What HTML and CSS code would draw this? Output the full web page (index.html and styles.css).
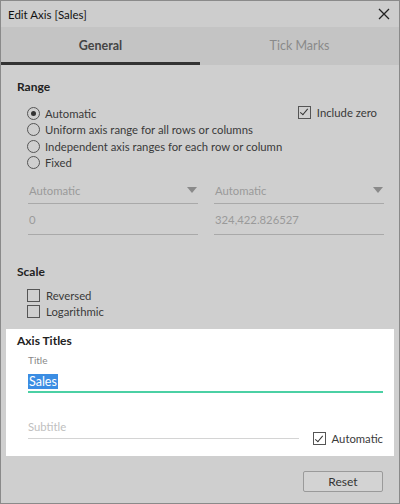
FILE: index.html
```html
<!DOCTYPE html>
<html>
<head>
<meta charset="utf-8">
<link rel="stylesheet" href="styles.css">
</head>
<body>
<div class="dialog">
  <div class="titlebar">
    <span class="title">Edit Axis [Sales]</span>
    <svg class="close" width="12" height="12" viewBox="0 0 12 12"><path d="M1 1L11 11M11 1L1 11" stroke="#222" stroke-width="1.3" fill="none"/></svg>
  </div>
  <div class="tabs">
    <div class="tab active">General</div>
    <div class="tab">Tick Marks</div>
  </div>
  <div class="content">
    <div class="section range">
      <div class="heading">Range</div>
      <div class="range-opts">
        <div class="radios">
          <label class="opt"><span class="radio on"></span>Automatic</label>
          <label class="opt"><span class="radio"></span>Uniform axis range for all rows or columns</label>
          <label class="opt"><span class="radio"></span>Independent axis ranges for each row or column</label>
          <label class="opt"><span class="radio"></span>Fixed</label>
        </div>
        <label class="opt zero"><span class="check on"></span>Include zero</label>
      </div>
      <div class="fields">
        <div class="field select"><span>Automatic</span><span class="arrow"></span></div>
        <div class="field select"><span>Automatic</span><span class="arrow"></span></div>
        <div class="field"><span>0</span></div>
        <div class="field"><span>324,422.826527</span></div>
      </div>
    </div>
    <div class="section scale">
      <div class="heading">Scale</div>
      <label class="opt"><span class="check"></span>Reversed</label>
      <label class="opt"><span class="check"></span>Logarithmic</label>
    </div>
    <div class="panel">
      <div class="heading">Axis Titles</div>
      <div class="small-label">Title</div>
      <div class="title-input"><span class="sel">Sales</span></div>
      <div class="subtitle-row">
        <div class="subtitle">Subtitle</div>
        <label class="opt auto"><span class="check on"></span>Automatic</label>
      </div>
    </div>
    <div class="footer">
      <button class="reset">Reset</button>
    </div>
  </div>
</div>
</body>
</html>
```
FILE: styles.css
```css
* { box-sizing: border-box; }
html, body { margin: 0; padding: 0; }
body {
  width: 400px; height: 504px;
  font-family: Lato, "Open Sans", sans-serif;
  font-size: 11.3px;
  color: #333;
}
.dialog {
  width: 400px; height: 504px;
  border: 1px solid #8a8a8a;
  background: #cfcfcf;
  display: flex; flex-direction: column;
}
.titlebar {
  height: 26px;
  display: flex; align-items: center; justify-content: space-between;
  padding: 0 9px 0 7px;
  background: #cdcdcd;
}
.title { font-family: Lato, sans-serif; font-size: 11.5px; color: #111; }
.tabs {
  height: 38px;
  display: flex;
  background: #c4c4c4;
}
.tab {
  flex: 1;
  display: flex; align-items: center; justify-content: center;
  font-size: 12.5px; color: #8a8a8a;
  border-bottom: 3px solid transparent;
  padding-top: 2px;
}
.tab.active { color: #444; font-weight: bold; border-bottom-color: #333; }
.content { flex: 1; display: flex; flex-direction: column; padding: 0 5px; }
.section { padding: 0 11px; }
.heading { font-weight: bold; font-size: 12px; color: #222; }
.range { padding-top: 14px; }
.range-opts { display: flex; justify-content: space-between; margin-top: 11px; padding-left: 10px; }
.radios { display: flex; flex-direction: column; }
.opt { display: flex; align-items: center; height: 16.5px; color: #3a3a3a; white-space: nowrap; }
.radio {
  width: 13px; height: 13px; border: 1px solid #555; border-radius: 50%;
  margin-right: 5px; display: inline-flex; align-items: center; justify-content: center; flex: none;
}
.radio.on::after { content: ""; width: 5px; height: 5px; border-radius: 50%; background: #333; }
.check {
  width: 13px; height: 13px; border: 1px solid #555; margin-right: 6px; flex: none;
  display: inline-flex; align-items: center; justify-content: center;
}
.check.on::after {
  content: ""; width: 3px; height: 7px; border: solid #333; border-width: 0 1.4px 1.4px 0;
  transform: translate(0,-1px) rotate(40deg);
}
.zero { margin-right: 6px; margin-top: -1px; }
.fields {
  display: grid; grid-template-columns: 170px 170px; column-gap: 16px;
  row-gap: 0; margin-top: 6px; padding-left: 11px;
}
.field {
  height: 31px; display: flex; align-items: center; justify-content: space-between;
  border-bottom: 1px solid #a9a9a9; color: #9a9a9a; padding-left: 1px;
}
.field.select { height: 27px; }
.arrow {
  width: 0; height: 0; border-left: 5px solid transparent; border-right: 5px solid transparent;
  border-top: 6px solid #8a8a8a; margin-right: 1px;
}
.scale { padding-top: 29px; }
.scale .heading { margin-bottom: 8px; }
.scale .opt { padding-left: 10px; }
.panel {
  background: #fff; margin-top: 9px; padding: 4px 11px 0;
  height: 127px;
}
.small-label { font-size: 10px; color: #888; padding-left: 11px; margin-top: 6px; }
.title-input {
  margin: 5px 0 0 11px; height: 22px; border-bottom: 2px solid #4bd0a4;
  display: flex; align-items: center; font-size: 12.5px;
}
.sel { background: #3b8de3; color: #fff; padding: 0 1px; line-height: 15px; }
.subtitle-row { display: flex; align-items: flex-end; justify-content: space-between; padding-left: 11px; margin-top: 27px; }
.subtitle {
  width: 271px; border-bottom: 1px solid #d4d4d4; color: #c0c0c0; height: 19px;
}
.auto { margin-bottom: -8px; }
.footer { flex: 1; display: flex; justify-content: flex-end; align-items: center; padding-right: 11px; padding-top: 3px; }
.reset {
  width: 80px; height: 21px; border: 1px solid #9a9a9a; background: #d3d3d3;
  font-family: Lato, sans-serif; font-size: 12px; color: #333; border-radius: 2px;
}
```
